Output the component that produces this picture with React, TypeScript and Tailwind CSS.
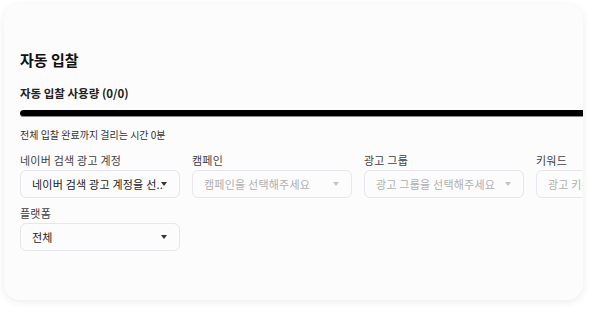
const font = { fontFamily: '"Noto Sans CJK KR", "Noto Sans", sans-serif' };

function Caret({ muted }: { muted?: boolean }) {
  return (
    <svg width="6" height="4" viewBox="0 0 6 4" className={`relative -ml-[3px] shrink-0 ${muted ? 'text-[#c4c4c4]' : 'text-[#333]'}`}>
      <path d="M0 0h6L3 4z" fill="currentColor" />
    </svg>
  );
}

function Field({ label, value, placeholder }: { label: string; value?: string; placeholder?: string }) {
  return (
    <div className="flex flex-col">
      <div className="h-[18px] text-[11px] leading-[18px] tracking-[0.02em] text-[#3f3f46]">{label}</div>
      <div className="mt-[1px] flex h-[28px] items-center rounded-md border border-[#e6e6ec] bg-[#fcfcfc] pl-[11px] pr-[12px]">
        <span className={`min-w-0 flex-1 overflow-hidden whitespace-nowrap text-[11px] tracking-[0.02em] ${value ? 'text-[#222]' : 'text-[#b0b0b0]'}`}>
          {value ?? placeholder}
        </span>
        <Caret muted={!value} />
      </div>
    </div>
  );
}

export default function App() {
  return (
    <div className="h-[312px] w-[595px] bg-white p-1" style={font}>
      <div className="h-[296px] w-[579px] overflow-hidden rounded-2xl bg-[#fcfcfc] shadow-[0_2px_8px_rgba(0,0,0,0.08)]">
        <div className="w-[676px] pl-4 pt-[45px]">
          <h1 className="text-[15px] font-bold leading-[22px] text-[#111]">자동 입찰</h1>
          <div className="mt-[14px] text-[11.5px] font-semibold leading-[16px] text-[#222]">자동 입찰 사용량 (0/0)</div>
          <div className="mt-[9px] h-[7px] rounded-l-full border-b border-[#888] bg-black" />
          <div className="mt-[11px] text-[10px] leading-[14px] text-[#333]">전체 입찰 완료까지 걸리는 시간 0분</div>
          <div className="mt-[9px] grid grid-cols-[160px_160px_160px_160px] gap-x-[12px] gap-y-[6px]">
            <Field label="네이버 검색 광고 계정" value="네이버 검색 광고 계정을 선..." />
            <Field label="캠페인" placeholder="캠페인을 선택해주세요" />
            <Field label="광고 그룹" placeholder="광고 그룹을 선택해주세요" />
            <Field label="키워드" placeholder="광고 키워드를 선택해주세요" />
            <Field label="플랫폼" value="전체" />
          </div>
        </div>
      </div>
    </div>
  );
}
